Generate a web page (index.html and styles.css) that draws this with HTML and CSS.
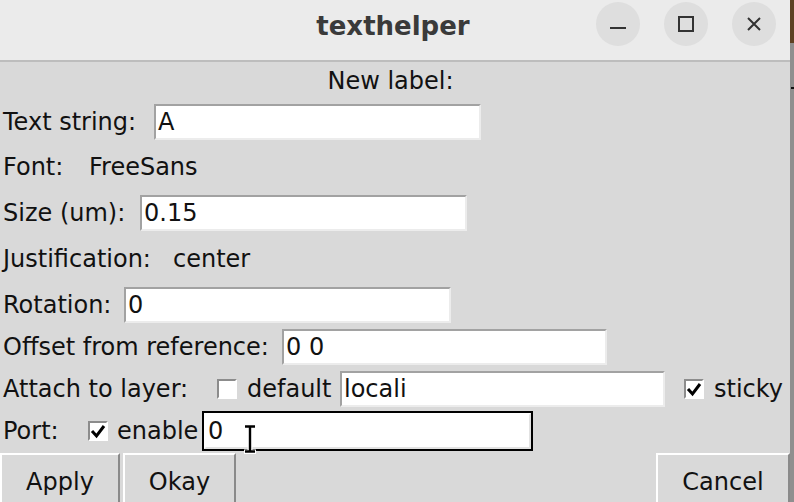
FILE: index.html
```html
<!DOCTYPE html>
<html>
<head>
<meta charset="utf-8">
<title>texthelper</title>
<link rel="stylesheet" href="styles.css">
</head>
<body>
<div class="screen">
  <div class="window">
    <header class="titlebar">
      <div class="title">texthelper</div>
      <div class="controls">
        <button class="wbtn" aria-label="Minimize"><svg width="16" height="16" viewBox="0 0 16 16"><path d="M0 12h16" stroke="#333" stroke-width="2"/></svg></button>
        <button class="wbtn" aria-label="Maximize"><svg width="16" height="16" viewBox="0 0 16 16"><rect x="1" y="1" width="14" height="14" fill="none" stroke="#333" stroke-width="2"/></svg></button>
        <button class="wbtn" aria-label="Close"><svg width="16" height="16" viewBox="0 0 16 16"><path d="M2 2L14 14M14 2L2 14" stroke="#333" stroke-width="2"/></svg></button>
      </div>
    </header>
    <main class="body">
      <div class="row row-head">New label:</div>
      <div class="row row-text">
        <span class="lbl w-text">Text string:</span>
        <div class="entry">A</div>
      </div>
      <div class="row row-font">
        <span class="lbl w-font">Font:</span>
        <span class="lbl">FreeSans</span>
      </div>
      <div class="row row-size">
        <span class="lbl w-size">Size (um):</span>
        <div class="entry">0.15</div>
      </div>
      <div class="row row-just">
        <span class="lbl w-just">Justification:</span>
        <span class="lbl">center</span>
      </div>
      <div class="row row-rot">
        <span class="lbl w-rot">Rotation:</span>
        <div class="entry">0</div>
      </div>
      <div class="row row-off">
        <span class="lbl w-off">Offset from reference:</span>
        <div class="entry entry-narrow">0 0</div>
      </div>
      <div class="row row-attach">
        <span class="lbl w-attach">Attach to layer:</span>
        <span class="cb"></span>
        <span class="lbl w-default">default</span>
        <div class="entry entry-narrow">locali</div>
        <span class="cb cb-sticky"><svg width="16" height="16" viewBox="0 0 16 16"><path d="M2 8L6.5 13L14 3" fill="none" stroke="#000" stroke-width="3"/></svg></span>
        <span class="lbl">sticky</span>
      </div>
      <div class="row row-port">
        <span class="lbl w-port">Port:</span>
        <span class="cb cb-port"><svg width="16" height="16" viewBox="0 0 16 16"><path d="M2 8L6.5 13L14 3" fill="none" stroke="#000" stroke-width="3"/></svg></span>
        <span class="lbl w-enable">enable</span>
        <div class="entry entry-focus">0</div>
        <svg class="ibeam" width="18" height="30" viewBox="0 0 18 30"><path d="M3 2h12M9 2v26M3 28h12" stroke="#fff" stroke-width="5"/><path d="M4 2.5h10M9 2v26M4 27.5h10" stroke="#000" stroke-width="2.4"/></svg>
      </div>
      <div class="buttons">
        <button class="btn btn-apply">Apply</button>
        <button class="btn btn-okay">Okay</button>
        <span class="spacer"></span>
        <button class="btn btn-cancel">Cancel</button>
      </div>
    </main>
  </div>
  <div class="edge">
    <div class="edge-top"></div>
    <div class="edge-bottom"><span class="edge-dot"></span></div>
  </div>
</div>
</body>
</html>
```
FILE: styles.css
```css
html, body {
  margin: 0;
  padding: 0;
  width: 794px;
  height: 502px;
  overflow: hidden;
  background: #8e8e8e;
}

.screen {
  display: flex;
  width: 794px;
  height: 502px;
  font-family: "DejaVu Sans", "Liberation Sans", sans-serif;
  font-size: 24px;
  color: #111;
}

.window {
  width: 790px;
  height: 502px;
  display: flex;
  flex-direction: column;
  background: #d9d9d9;
  overflow: hidden;
}

.edge {
  width: 4px;
  display: flex;
  flex-direction: column;
}
.edge-top {
  height: 43px;
  background: #5e4123;
}
.edge-bottom {
  flex: 1;
  background: #8f8f8f;
  padding-top: 44px;
}
.edge-dot {
  display: block;
  width: 3px;
  height: 2px;
  background: #111;
  margin-left: 1px;
}

/* title bar */
.titlebar {
  height: 60px;
  flex: none;
  background: #ebebeb;
  border-bottom: 2px solid #bdbdbd;
  display: grid;
  grid-template-columns: 1fr auto 1fr;
  align-items: center;
}
.title {
  grid-column: 2;
  font-weight: bold;
  font-size: 26px;
  color: #3a3a3a;
  margin-top: -9px;
  margin-left: -4px;
}
.controls {
  grid-column: 3;
  justify-self: end;
  display: flex;
  gap: 24px;
  padding-right: 14px;
  margin-top: -12px;
}
.wbtn {
  width: 44px;
  height: 44px;
  border-radius: 50%;
  border: none;
  padding: 0;
  background: #dedede;
  display: flex;
  align-items: center;
  justify-content: center;
}

/* body rows */
.body {
  flex: 1;
  display: flex;
  flex-direction: column;
}
.row {
  display: flex;
  align-items: center;
  padding-left: 3px;
  flex: none;
}
.row-head {
  height: 38px;
  justify-content: center;
  padding-left: 0;
  padding-right: 9px;
}
.row-text { height: 43px; }
.row-font { height: 48px; }
.row-size { height: 44px; }
.row-just { height: 48px; }
.row-rot { height: 44px; }
.row-off { height: 40px; }
.row-attach { height: 44px; }
.row-port { height: 40px; position: relative; }

.lbl {
  white-space: nowrap;
  flex: none;
}
.w-text { width: 151px; }
.w-font { width: 86px; }
.w-size { width: 137px; }
.w-just { width: 170px; }
.w-rot { width: 121px; }
.w-off { width: 279px; }
.w-attach { width: 214px; }
.w-default { width: 93px; margin-left: 10px; }
.w-port { width: 85px; }
.w-enable { width: 87px; margin-left: 9px; }

.entry {
  box-sizing: border-box;
  width: 327px;
  height: 36px;
  background: #fff;
  border: 2px solid;
  border-color: #a2a2a2 #ececec #ececec #a2a2a2;
  padding: 0 2px;
  display: flex;
  align-items: center;
  white-space: nowrap;
  flex: none;
}
.entry-narrow { width: 325px; }
.entry-focus {
  outline: 2px solid #000;
  border-color: #fff #e2e2e2 #e2e2e2 #fff;
}

.cb {
  box-sizing: border-box;
  width: 20px;
  height: 20px;
  background: #fff;
  border: 2px solid;
  border-color: #8c8c8c #fff #fff #8c8c8c;
  display: flex;
  align-items: center;
  justify-content: center;
  flex: none;
}
.cb-sticky {
  margin-left: 19px;
  margin-right: 10px;
}
.cb-port { margin-left: 0; }

.ibeam {
  position: absolute;
  left: 241px;
  top: 13px;
}

/* buttons */
.buttons {
  margin-top: 2px;
  display: flex;
  gap: 3px;
  flex: none;
}
.btn {
  box-sizing: border-box;
  height: 60px;
  font: inherit;
  color: #111;
  background: #d9d9d9;
  border: 2px solid;
  border-color: #fff #8a8a8a #8a8a8a #fff;
  padding: 0 0 2px 0;
  flex: none;
}
.btn-apply { width: 120px; }
.btn-okay { width: 113px; }
.btn-cancel { width: 134px; }
.spacer { flex: 1; }
```
